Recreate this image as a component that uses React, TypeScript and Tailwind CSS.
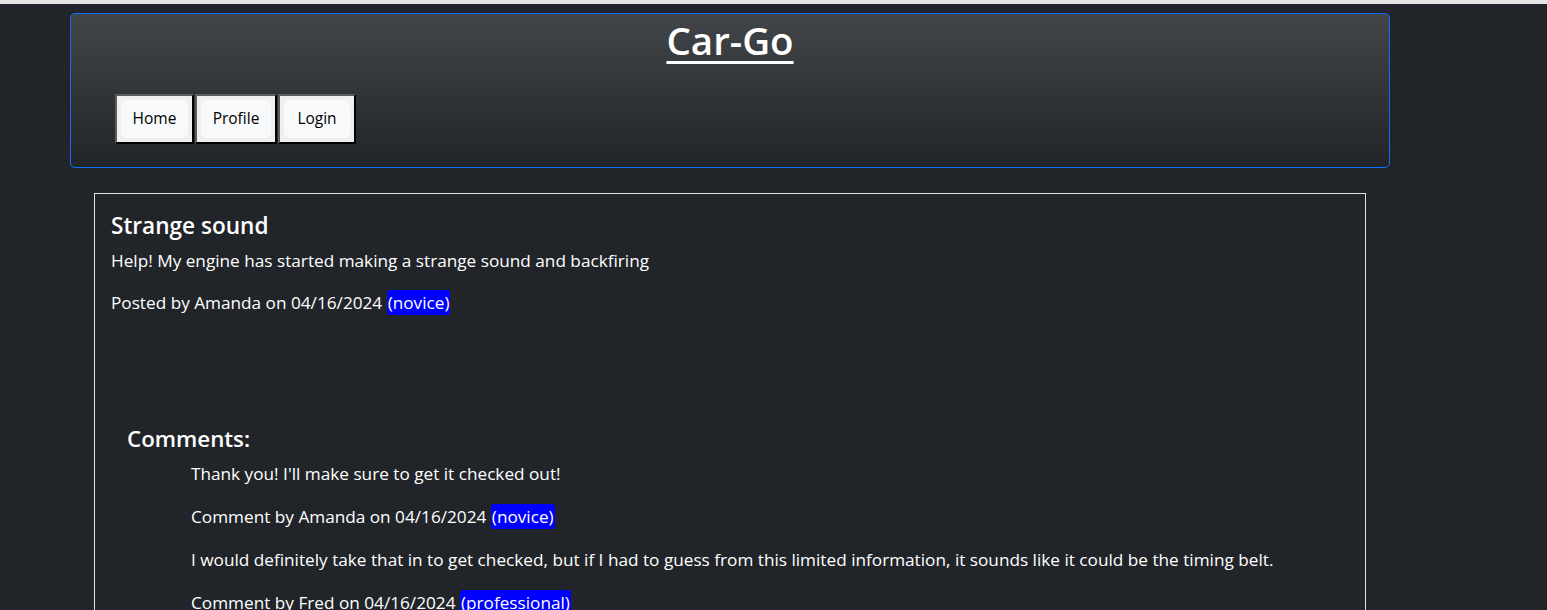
import React from "react";

const font = { fontFamily: '"Open Sans", "Noto Sans", sans-serif' };

function NavButton({ label, w }: { label: string; w: string }) {
  return (
    <button className={`${w} h-[50px] p-[4px] bg-[#efefef] border-2 border-t-[#5c5c5c] border-l-[#5c5c5c] border-r-black border-b-black`}>
      <span className="block h-[38px] rounded-[6px] bg-[#f8f9fa] text-center text-[#000] text-[15.5px] leading-[37px]">
        {label}
      </span>
    </button>
  );
}

function Badge({ children }: { children: React.ReactNode }) {
  return <span className="bg-[#0000ff] text-white rounded-[3px] px-[1px] py-[1px]">{children}</span>;
}

export default function App() {
  const comments = [
    { text: "Thank you! I'll make sure to get it checked out!", by: "Amanda", level: "novice" },
    {
      text: "I would definitely take that in to get checked, but if I had to guess from this limited information, it sounds like it could be the timing belt.",
      by: "Fred",
      level: "professional",
    },
  ];
  return (
    <div className="min-h-[610px] bg-[#212529] border-t-4 border-[#e6e6e6] text-[#f8f9fa]" style={font}>
      <div className="w-[1320px] ml-[70px] pt-[9px]">
        <header className="rounded-[5px] border border-[#0d6efd] bg-[#212529] bg-[linear-gradient(180deg,rgba(255,255,255,0.15),rgba(255,255,255,0))] px-[44px] pt-[2px] pb-[23px]">
          <h1 className="text-center text-[38.5px] font-semibold leading-[48px] underline underline-offset-[6px] decoration-[3px] text-white">
            Car-Go
          </h1>
          <nav className="mt-[30px] flex gap-[1px]">
            <NavButton label="Home" w="w-[79px]" />
            <NavButton label="Profile" w="w-[82px]" />
            <NavButton label="Login" w="w-[78px]" />
          </nav>
        </header>
        <main className="mx-[24px] mt-[25px] border border-[#dee2e6] px-[16px] pt-[17px] pb-[40px]">
          <h4 className="text-[22.6px] font-semibold leading-[30px] text-white">Strange sound</h4>
          <p className="mt-[6px] text-[17.2px] leading-[27px] text-white">
            Help! My engine has started making a strange sound and backfiring
          </p>
          <p className="mt-[15px] text-[17.2px] leading-[27px] text-white">
            Posted by Amanda on 04/16/2024 <Badge>(novice)</Badge>
          </p>
          <section className="mt-[108px] pl-[16px]">
            <h5 className="text-[22.3px] font-semibold leading-[30px] text-white">Comments:</h5>
            <div className="pl-[64px] mt-[6px] text-[17.2px] leading-[27px] text-white">
              {comments.map((c, i) => (
                <div key={i}>
                  <p className="mb-[16px]">{c.text}</p>
                  <p className="mb-[16px]">
                    Comment by {c.by} on 04/16/2024 <Badge>({c.level})</Badge>
                  </p>
                </div>
              ))}
            </div>
          </section>
        </main>
      </div>
    </div>
  );
}
